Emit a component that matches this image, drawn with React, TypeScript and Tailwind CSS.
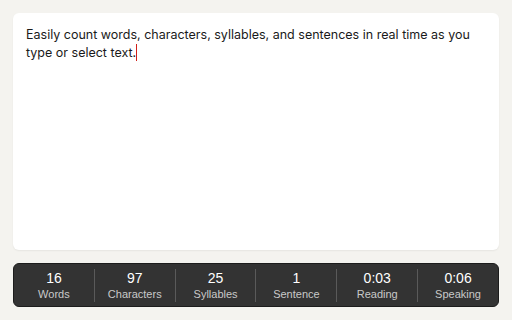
import React from "react";

const stats = [
  { v: "16", l: "Words" },
  { v: "97", l: "Characters" },
  { v: "25", l: "Syllables" },
  { v: "1", l: "Sentence" },
  { v: "0:03", l: "Reading" },
  { v: "0:06", l: "Speaking" },
];

export default function App() {
  return (
    <div
      className="w-[512px] h-[320px] bg-[#f4f3ef] p-[13px] flex flex-col gap-[13px]"
      style={{ fontFamily: "Inter, 'Noto Sans', sans-serif" }}
    >
      <div className="h-[237px] bg-white rounded-[6px] shadow-[0_1px_2px_rgba(0,0,0,0.06)] px-[13px] pt-[13px] text-[12.5px] leading-[18px] text-[#1a1a1a]">
        Easily count words, characters, syllables, and sentences in real time as you type or select text.
        <span className="inline-block w-px h-[17px] bg-[#d0201a] align-[-4px]" />
      </div>
      <div
        className="h-[44px] bg-[#333333] rounded-[6px] border border-[#1c1c1c] flex items-center"
        style={{ fontFamily: "'Liberation Sans', Arial, sans-serif" }}
      >
        {stats.map((s, i) => (
          <div
            key={s.l}
            className={`flex-1 flex flex-col items-center justify-center h-[33px] ${i > 0 ? "border-l border-[#5a5a5a]" : ""}`}
          >
            <div className="text-[14px] leading-[17px] text-white">{s.v}</div>
            <div className="text-[11px] leading-[14px] text-[#c9c9c9]">{s.l}</div>
          </div>
        ))}
      </div>
    </div>
  );
}
